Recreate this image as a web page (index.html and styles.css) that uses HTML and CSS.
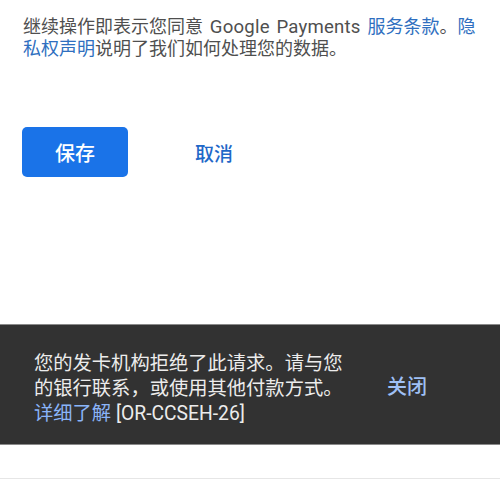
FILE: index.html
```html
<!DOCTYPE html>
<html lang="zh-CN">
<head>
<meta charset="utf-8">
<link rel="stylesheet" href="styles.css">
</head>
<body>
<div class="page">
  <div class="content">
    <p class="terms">继续操作即表示您同意<span class="latin"> Google Payments </span><a class="link">服务条款</a>。<a class="link">隐私权声明</a>说明了我们如何处理您的数据。</p>
    <div class="actions">
      <button class="btn-primary">保存</button>
      <button class="btn-text">取消</button>
    </div>
  </div>
  <div class="snackbar">
    <div class="snack-text">您的发卡机构拒绝了此请求。请与您的银行联系，或使用其他付款方式。<br><a class="snack-link">详细了解</a> [OR-CCSEH-26]</div>
    <button class="snack-action">关闭</button>
  </div>
  <div class="below"></div>
</div>
</body>
</html>
```

FILE: styles.css
```css
html, body {
  margin: 0;
  padding: 0;
  background: #ffffff;
}
body {
  font-family: Roboto, "Noto Sans CJK SC", sans-serif;
}
.page {
  width: 500px;
  height: 500px;
  overflow: hidden;
}
.content {
  padding: 16px 20px 0 23px;
}
.terms {
  margin: 0;
  font-size: 18px;
  line-height: 22px;
  color: #4f4f4f;
}
.latin {
  font-size: 18.6px;
  letter-spacing: 0.2px;
  word-spacing: 2px;
}
.link {
  color: #2f6fc0;
  text-decoration: none;
}
.actions {
  display: flex;
  align-items: center;
  margin-top: 67px;
  margin-left: -1px;
}
.btn-primary {
  width: 106px;
  height: 50px;
  border: none;
  border-radius: 5px;
  background: #1a73e8;
  color: #ffffff;
  font-family: inherit;
  font-size: 20px;
  font-weight: 500;
  padding: 0;
}
.btn-text {
  margin-left: 67px;
  border: none;
  background: none;
  color: #1f68c8;
  font-family: inherit;
  font-size: 19px;
  font-weight: 500;
  padding: 0;
}
.snackbar {
  margin-top: 147px;
  height: 121px;
  box-sizing: border-box;
  background: #323232;
  border-top: 1px solid #8a8a8a;
  border-bottom: 1px solid #8a8a8a;
  display: flex;
  align-items: center;
  padding: 0 0 0 34px;
}
.snack-text {
  width: 320px;
  font-size: 19.3px;
  line-height: 25px;
  color: #ececec;
  margin-top: 8px;
}
.snack-link {
  color: #8ab4f8;
  text-decoration: none;
}
.snack-action {
  margin-left: 33px;
  margin-top: 2px;
  border: none;
  background: none;
  color: #9fc0f5;
  font-family: inherit;
  font-size: 20px;
  font-weight: 500;
  padding: 0;
}
.below {
  height: 33px;
  border-bottom: 1px solid #e6e6e6;
}
```
